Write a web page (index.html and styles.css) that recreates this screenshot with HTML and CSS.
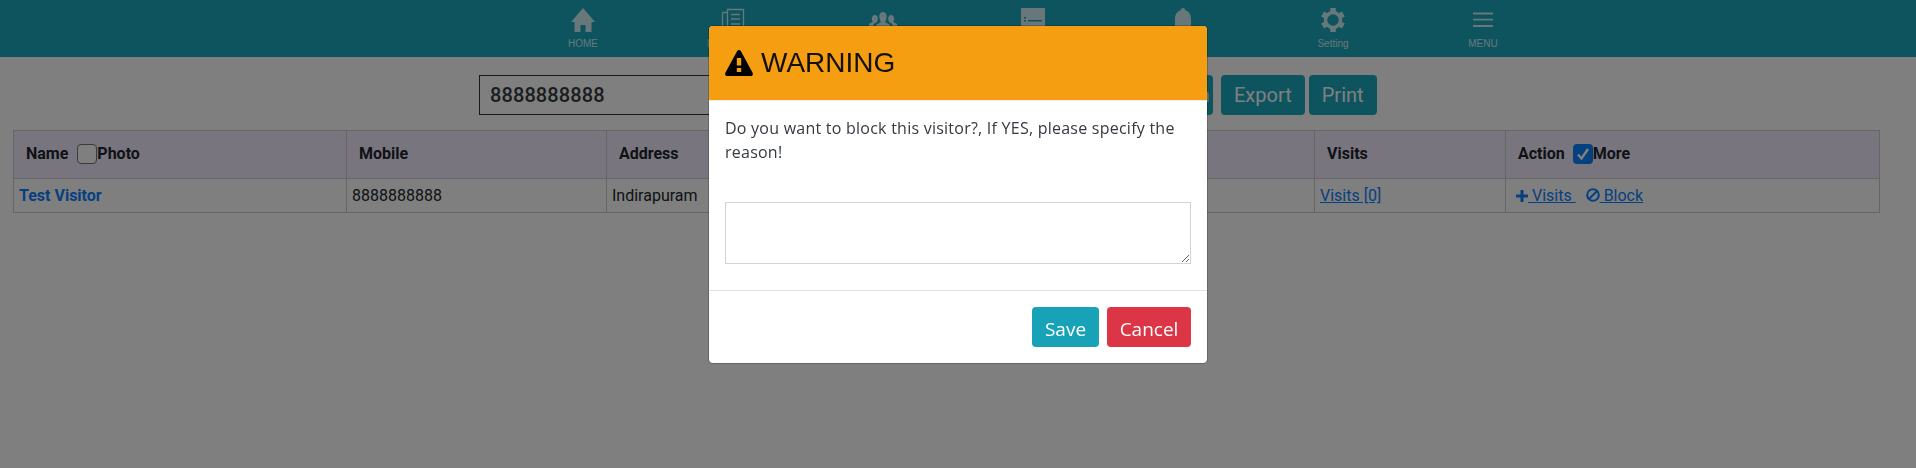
FILE: index.html
```html
<!DOCTYPE html>
<html lang="en">
<head>
    <meta charset="UTF-8">
    <title>Visitors</title>
    <link rel="stylesheet" href="styles.css">
</head>
<body>

    <!-- Top navigation -->
    <nav class="topnav">
        <a class="nav-item">
            <svg viewBox="0 0 24 24" width="24" height="24"><path d="M12 0 24 14H20.500V24H14.500V17H9.500V24H3.500V14H0z" fill="currentColor"/></svg>
            <span>HOME</span>
        </a>
        <a class="nav-item">
            <svg viewBox="0 0 24 24" width="24" height="24"><path d="M6.500 1.500h16v21h-16zM1.500 4.500h5M1.500 4.500v16h5M10 6.500h9M10 11h9M10 16h9" fill="none" stroke="currentColor" stroke-width="1.300"/></svg>
            <span>Front Office</span>
        </a>
        <a class="nav-item">
            <svg viewBox="0 0 28 24" width="28" height="24"><path d="M14 4c3 0 4 3 3.500 6-.3 2-1 3-1.500 4l5 3v5H7v-5l5-3c-.5-1-1.200-2-1.500-4C10 7 11 4 14 4zM6 7c2 0 3 2 2.800 4-.1 1.500-.8 2.400-1 3L4.500 16v4H0v-4l3.800-2.200C3.300 13 2.800 12 2.800 11 2.600 9 4 7 6 7zM22 7c2 0 3.400 2 3.200 4 0 1-.5 2-1 2.800L28 16v4h-4.500v-4l-3.300-2c-.2-.6-.9-1.500-1-3C19 9 20 7 22 7z" fill="currentColor"/></svg>
            <span>Visitors</span>
        </a>
        <a class="nav-item">
            <svg viewBox="0 0 24 24" width="24" height="24"><path d="M0 0h24v24H0z M3 9v1.500h2V9z M3 12v1.500h2V12z M7 12v1.500h14V12z" fill="currentColor" fill-rule="evenodd"/></svg>
            <span>Register</span>
        </a>
        <a class="nav-item">
            <svg viewBox="0 0 24 24" width="24" height="24"><path d="M12 0c1.500 0 2.200 1 2.200 2.200C18.500 3.500 20 7 20 11v7l2 3H2l2-3v-7C4 7 5.500 3.500 9.800 2.200 9.800 1 10.500 0 12 0z" fill="currentColor"/></svg>
            <span>Alert</span>
        </a>
        <a class="nav-item">
            <svg viewBox="0 0 24 24" width="24" height="24">
                <circle cx="12" cy="12" r="7.500" fill="none" stroke="currentColor" stroke-width="3.500"/>
                <path d="M12 0v5M12 19v5M22.400 6 18 8.500M1.600 18 6 15.500M22.400 18 18 15.500M1.600 6 6 8.500" stroke="currentColor" stroke-width="5.500"/>
            </svg>
            <span>Setting</span>
        </a>
        <a class="nav-item">
            <svg viewBox="0 0 24 24" width="24" height="24"><path d="M2 5.500h20M2 11.700h20M2 18h20" stroke="currentColor" stroke-width="1.800"/></svg>
            <span>MENU</span>
        </a>
    </nav>

    <main class="content">
        <!-- Search bar -->
        <div class="toolbar">
            <input class="search-input" type="text" value="8888888888">
            <button class="tool-btn search-btn">Search</button>
            <button class="tool-btn export-btn">Export</button>
            <button class="tool-btn print-btn">Print</button>
        </div>

        <!-- Visitor list -->
        <table class="visitor-table">
            <colgroup>
                <col class="col-name">
                <col class="col-mobile">
                <col class="col-address">
                <col class="col-email">
                <col class="col-visits">
                <col class="col-action">
            </colgroup>
            <thead>
                <tr>
                    <th>Name <span class="check"></span>Photo</th>
                    <th>Mobile</th>
                    <th>Address</th>
                    <th>Email</th>
                    <th>Visits</th>
                    <th>Action <span class="check checked">
                        <svg viewBox="0 0 20 20" width="20" height="20"><path d="M5 10.500 8.500 14.500 15 5" fill="none" stroke="#fff" stroke-width="2.500"/></svg>
                    </span>More</th>
                </tr>
            </thead>
            <tbody>
                <tr>
                    <td class="visitor-name"><a>Test Visitor</a></td>
                    <td>8888888888</td>
                    <td>Indirapuram</td>
                    <td></td>
                    <td><a class="link">Visits [0]</a></td>
                    <td>
                        <a class="link action-link"><svg viewBox="0 0 12 12" width="12" height="12"><path d="M6 0v12M0 6h12" stroke="currentColor" stroke-width="3"/></svg> Visits </a>
                        <a class="link action-link block-link"><svg viewBox="0 0 14 14" width="14" height="14"><circle cx="7" cy="7" r="5.800" fill="none" stroke="currentColor" stroke-width="2"/><path d="M3 11 11 3" stroke="currentColor" stroke-width="2"/></svg> Block </a>
                    </td>
                </tr>
            </tbody>
        </table>
    </main>

    <!-- Block visitor dialog -->
    <div class="backdrop">
        <div class="modal">
            <div class="modal-header">
                <svg viewBox="0 0 28 26" width="28" height="26"><path fill-rule="evenodd" fill="#000" d="M14 0c.8 0 1.400.4 1.800 1.100L27.600 22.800c.8 1.500-.2 3.200-1.800 3.200H2.200C.6 26-.4 24.300.4 22.800L12.200 1.100C12.600.4 13.200 0 14 0zM11.800 8v7.500h4.400V8zM11.800 18v4h4.400v-4z"/></svg>
                <h3>WARNING</h3>
            </div>
            <div class="modal-body">
                <p>Do you want to block this visitor?, If YES, please specify the reason!</p>
                <textarea class="reason"></textarea>
            </div>
            <div class="modal-footer">
                <button class="btn btn-save">Save</button>
                <button class="btn btn-cancel">Cancel</button>
            </div>
        </div>
    </div>

</body>
</html>
```

FILE: styles.css
```css
* { box-sizing: border-box; }
body { margin: 0; font-family: Roboto, sans-serif; background: #fff; color: #212529; height: 468px; overflow: hidden; }

.topnav { height: 57px; background: #1aa8bf; display: flex; padding-left: 508px; }
.nav-item { width: 150px; height: 57px; padding-top: 8px; display: flex; flex-direction: column; align-items: center; color: #d0eef2; }
.nav-item svg { display: block; }
.nav-item span { font: 10px "Liberation Sans", Arial, sans-serif; margin-top: 6px; white-space: nowrap; }

.content { padding: 0 36px 0 13px; }
.toolbar { display: flex; padding-left: 466px; margin-top: 18px; height: 40px; }
.search-input { width: 651px; height: 40px; border: 1px solid #333; padding: 0 10px; font: 500 20px Roboto, sans-serif; letter-spacing: 0.1px; color: #343a40; }
.tool-btn { height: 40px; border: 0; border-radius: 4px; background: #1aa8bf; color: #fff; font: 20px Roboto, sans-serif; padding: 0 13px; margin-left: 5px; }
.search-btn { width: 78px; }
.export-btn { margin-left: 8px; }
.print-btn { margin-left: 4px; }

.visitor-table { width: 1866px; margin-top: 15px; border-collapse: collapse; table-layout: fixed; font-size: 16px; }
.visitor-table th, .visitor-table td { border: 1px solid #ccc; text-align: left; }
.visitor-table th { height: 48px; background: #f0eaff; padding: 0 12px 2px; font-weight: 700; line-height: 20px; }
.visitor-table td { height: 34px; padding: 0 5px; }
.col-name { width: 333px; }
.col-mobile { width: 260px; }
.col-address { width: 300px; }
.col-email { width: 408px; }
.col-visits { width: 191px; }
.col-action { width: 374px; }
.check { display: inline-block; width: 20px; height: 20px; border: 1.5px solid #767676; border-radius: 4px; vertical-align: -5px; margin: 0 0 0 5px; background: #fff; }
.check.checked { background: #0b80ff; border: 0; margin-left: 4px; }
.check svg { display: block; }
.visitor-name a { color: #0b80ff; font-weight: 700; }
.link { color: #0b80ff; text-decoration: underline; }
.action-link svg { vertical-align: -1px; }
.action-link { margin-left: 5px; }
.block-link { margin-left: 10px; }

/* Dialog over the page */
.backdrop { position: fixed; top: 0; right: 0; bottom: 0; left: 0; background: rgba(0, 0, 0, 0.5); display: flex; justify-content: center; align-items: flex-start; padding-top: 25px; }
.modal { width: 500px; height: 339px; background: #fff; border: 1px solid rgba(0, 0, 0, 0.2); border-radius: 5px; font-family: "Open Sans", sans-serif; background-clip: padding-box; display: flex; flex-direction: column; }
.modal-header { height: 75px; background: #f59e12; border-bottom: 1px solid #e9ecef; border-radius: 4px 4px 0 0; display: flex; align-items: center; padding: 0 16px; gap: 8px; }
.modal-header h3 { margin: 0; font: 28px "Liberation Sans", Arial, sans-serif; color: #111; }
.modal-body { padding: 15px 16px 0; height: 190px; border-bottom: 1px solid #dee2e6; }
.modal-body p { margin: 0; font-size: 16px; letter-spacing: 0.24px; line-height: 24px; color: #343a40; }
.reason { display: block; width: 466px; height: 62px; margin-top: 38px; border: 1px solid #ced4da; }
.modal-footer { display: flex; justify-content: flex-end; gap: 8px; padding: 16px; }
.btn { height: 40px; border: 0; border-radius: 4px; color: #fff; font: 19px "Open Sans", sans-serif; padding: 3px 0 0; }
.btn-save { width: 67px; background: #17a2b8; }
.btn-cancel { width: 84px; background: #dc3545; }
```
